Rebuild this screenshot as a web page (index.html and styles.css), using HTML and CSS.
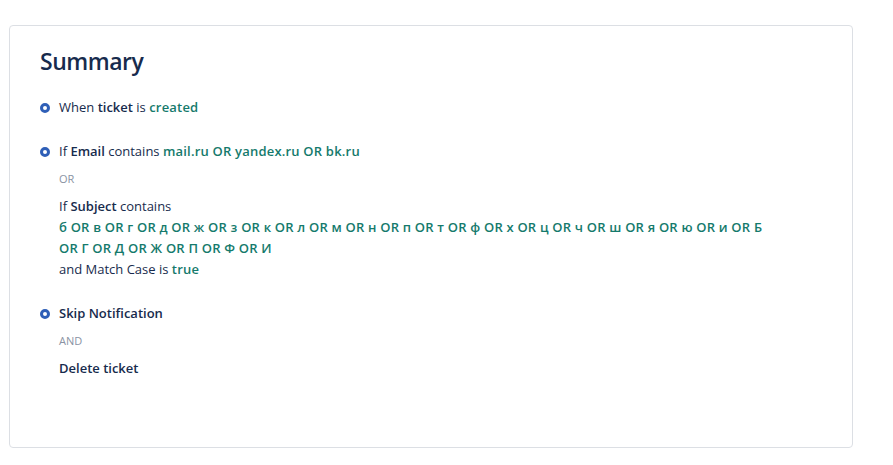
FILE: index.html
```html
<!DOCTYPE html>
<html lang="ru">
<head>
    <meta charset="UTF-8">
    <meta name="viewport" content="width=device-width, initial-scale=1.0">
    <title>Summary</title>
    <link rel="stylesheet" href="styles.css">
</head>
<body>

<div class="summary-card">
    <h2 class="summary-title">Summary</h2>

    <ul class="rule-list">
        <!-- триггер -->
        <li class="rule-item">
            <div class="rule-line">When <b>ticket</b> is <span class="value">created</span></div>
        </li>

        <!-- условия -->
        <li class="rule-item">
            <div class="rule-line">If <b>Email</b> contains <span class="value">mail.ru OR yandex.ru OR bk.ru</span></div>
            <div class="joiner">OR</div>
            <div class="rule-line">If <b>Subject</b> contains</div>
            <div class="rule-line value">б OR в OR г OR д OR ж OR з OR к OR л OR м OR н OR п OR т OR ф OR х OR ц OR ч OR ш OR я OR ю OR и OR Б OR Г OR Д OR Ж OR П OR Ф OR И</div>
            <div class="rule-line">and Match Case is <span class="value">true</span></div>
        </li>

        <!-- действия -->
        <li class="rule-item">
            <div class="rule-line"><b>Skip Notification</b></div>
            <div class="joiner">AND</div>
            <div class="rule-line"><b>Delete ticket</b></div>
        </li>
    </ul>
</div>

</body>
</html>
```

FILE: styles.css
```css
body {
    font-family: "Open Sans", "Noto Sans", sans-serif;
    margin: 0;
    padding: 25px 0 0 9px;
    background-color: #fff;
    color: #172b4d;
}
/* карточка */
.summary-card {
    box-sizing: border-box;
    width: 844px;
    height: 423px;
    border: 1px solid #dcdfe4;
    border-radius: 4px;
    padding: 19px 30px;
}
.summary-title {
    margin: 0 0 20px 0;
    font-size: 23px;
    font-weight: 600;
    letter-spacing: -0.5px;
    line-height: 32px;
}
/* список правил */
.rule-list {
    list-style: none;
    margin: 0;
    padding: 0;
    max-width: 740px;
}
.rule-item {
    position: relative;
    padding-left: 19px;
    margin-bottom: 23px;
}
.rule-item::before {
    content: "";
    position: absolute;
    left: 0;
    top: 6px;
    width: 4px;
    height: 4px;
    border: 3px solid #2f5fb7;
    border-radius: 50%;
}
.rule-line {
    font-size: 13px;
    line-height: 21px;
}
.rule-line b {
    font-weight: 600;
}
.value {
    color: #157a6c;
    font-weight: 600;
    letter-spacing: 0.2px;
}
.joiner {
    font-size: 11px;
    line-height: 16px;
    color: #8a93a3;
    margin: 9px 0;
}
```
